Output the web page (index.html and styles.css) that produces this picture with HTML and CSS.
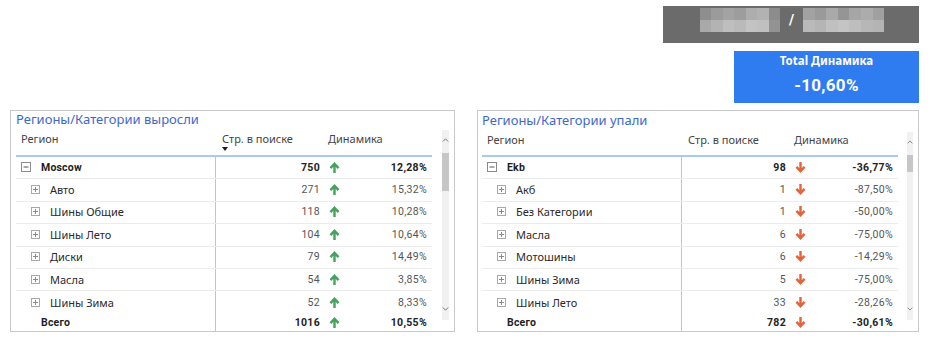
FILE: index.html
```html
<!DOCTYPE html>
<html lang="ru">
<head>
<meta charset="utf-8">
<title>Регионы</title>
<link rel="stylesheet" href="styles.css">
</head>
<body>
<div class="page">
  <div class="top">
    <div class="banner">
      <div class="mosaic mosaic--a">
        <i class="m1"></i><i class="m2"></i><i class="m3"></i><i class="m4"></i><i class="m5"></i><i class="m6"></i><i class="m7"></i>
        <i class="m8"></i><i class="m9"></i><i class="m10"></i><i class="m11"></i><i class="m12"></i><i class="m13"></i><i class="m14"></i>
      </div>
      <span class="slash">/</span>
      <div class="mosaic mosaic--b">
        <i class="n1"></i><i class="n2"></i><i class="n3"></i><i class="n4"></i><i class="n5"></i><i class="n6"></i><i class="n7"></i>
        <i class="n8"></i><i class="n9"></i><i class="n10"></i><i class="n11"></i><i class="n12"></i><i class="n13"></i><i class="n14"></i>
      </div>
    </div>
    <div class="kpi">
      <div class="kpi-label">Total Динамика</div>
      <div class="kpi-value">-10,60%</div>
    </div>
  </div>

  <div class="panels">
    <section class="panel panel--left">
      <div class="panel-title">Регионы/Категории выросли</div>
      <div class="panel-body">
        <div class="table">
          <div class="thead">
            <div class="h-region">Регион</div>
            <div class="h-num">Стр. в поиске<span class="sort"></span></div>
            <div class="h-dyn">Динамика</div>
          </div>
          <div class="row row--bold">
            <div class="cell c-region lvl0"><svg class="box" width="10" height="10" viewBox="0 0 10 10"><rect x="0.5" y="0.5" width="9" height="9" fill="none" stroke="#8a8a8a"/><path d="M2.5 5H7.5" stroke="#555"/></svg><span class="name-b">Moscow</span></div>
            <div class="cell c-num">750</div>
            <div class="cell c-arrow"><svg width="11" height="11" viewBox="0 0 10 10"><path d="M5 10V2M1.3 5.6L5 1.7L8.7 5.6" fill="none" stroke="#45a35c" stroke-width="2.2"/></svg></div>
            <div class="cell c-pct">12,28%</div>
          </div>
          <div class="row">
            <div class="cell c-region lvl1"><svg class="box" width="9" height="9" viewBox="0 0 9 9"><rect x="0.5" y="0.5" width="8" height="8" fill="none" stroke="#a8a8a8"/><path d="M2 4.5H7M4.5 2V7" stroke="#8a8a8a"/></svg><span>Авто</span></div>
            <div class="cell c-num">271</div>
            <div class="cell c-arrow"><svg width="11" height="11" viewBox="0 0 10 10"><path d="M5 10V2M1.3 5.6L5 1.7L8.7 5.6" fill="none" stroke="#45a35c" stroke-width="2.2"/></svg></div>
            <div class="cell c-pct">15,32%</div>
          </div>
          <div class="row">
            <div class="cell c-region lvl1"><svg class="box" width="9" height="9" viewBox="0 0 9 9"><rect x="0.5" y="0.5" width="8" height="8" fill="none" stroke="#a8a8a8"/><path d="M2 4.5H7M4.5 2V7" stroke="#8a8a8a"/></svg><span>Шины Общие</span></div>
            <div class="cell c-num">118</div>
            <div class="cell c-arrow"><svg width="11" height="11" viewBox="0 0 10 10"><path d="M5 10V2M1.3 5.6L5 1.7L8.7 5.6" fill="none" stroke="#45a35c" stroke-width="2.2"/></svg></div>
            <div class="cell c-pct">10,28%</div>
          </div>
          <div class="row">
            <div class="cell c-region lvl1"><svg class="box" width="9" height="9" viewBox="0 0 9 9"><rect x="0.5" y="0.5" width="8" height="8" fill="none" stroke="#a8a8a8"/><path d="M2 4.5H7M4.5 2V7" stroke="#8a8a8a"/></svg><span>Шины Лето</span></div>
            <div class="cell c-num">104</div>
            <div class="cell c-arrow"><svg width="11" height="11" viewBox="0 0 10 10"><path d="M5 10V2M1.3 5.6L5 1.7L8.7 5.6" fill="none" stroke="#45a35c" stroke-width="2.2"/></svg></div>
            <div class="cell c-pct">10,64%</div>
          </div>
          <div class="row">
            <div class="cell c-region lvl1"><svg class="box" width="9" height="9" viewBox="0 0 9 9"><rect x="0.5" y="0.5" width="8" height="8" fill="none" stroke="#a8a8a8"/><path d="M2 4.5H7M4.5 2V7" stroke="#8a8a8a"/></svg><span>Диски</span></div>
            <div class="cell c-num">79</div>
            <div class="cell c-arrow"><svg width="11" height="11" viewBox="0 0 10 10"><path d="M5 10V2M1.3 5.6L5 1.7L8.7 5.6" fill="none" stroke="#45a35c" stroke-width="2.2"/></svg></div>
            <div class="cell c-pct">14,49%</div>
          </div>
          <div class="row">
            <div class="cell c-region lvl1"><svg class="box" width="9" height="9" viewBox="0 0 9 9"><rect x="0.5" y="0.5" width="8" height="8" fill="none" stroke="#a8a8a8"/><path d="M2 4.5H7M4.5 2V7" stroke="#8a8a8a"/></svg><span>Масла</span></div>
            <div class="cell c-num">54</div>
            <div class="cell c-arrow"><svg width="11" height="11" viewBox="0 0 10 10"><path d="M5 10V2M1.3 5.6L5 1.7L8.7 5.6" fill="none" stroke="#45a35c" stroke-width="2.2"/></svg></div>
            <div class="cell c-pct">3,85%</div>
          </div>
          <div class="row row--last">
            <div class="cell c-region lvl1"><svg class="box" width="9" height="9" viewBox="0 0 9 9"><rect x="0.5" y="0.5" width="8" height="8" fill="none" stroke="#a8a8a8"/><path d="M2 4.5H7M4.5 2V7" stroke="#8a8a8a"/></svg><span>Шины Зима</span></div>
            <div class="cell c-num">52</div>
            <div class="cell c-arrow"><svg width="11" height="11" viewBox="0 0 10 10"><path d="M5 10V2M1.3 5.6L5 1.7L8.7 5.6" fill="none" stroke="#45a35c" stroke-width="2.2"/></svg></div>
            <div class="cell c-pct">8,33%</div>
          </div>
          <div class="row row--total row--bold">
            <div class="cell c-region lvltot"><span class="name-b">Всего</span></div>
            <div class="cell c-num">1016</div>
            <div class="cell c-arrow"><svg width="11" height="11" viewBox="0 0 10 10"><path d="M5 10V2M1.3 5.6L5 1.7L8.7 5.6" fill="none" stroke="#45a35c" stroke-width="2.2"/></svg></div>
            <div class="cell c-pct">10,55%</div>
          </div>
        </div>
        <div class="scroll">
          <div class="chev chev--up"><svg width="7" height="4" viewBox="0 0 7 4"><polyline points="0.8,3.6 3.5,0.8 6.2,3.6" fill="none" stroke="#7a7a7a"/></svg></div>
          <div class="thumb thumb--tall"></div>
          <div class="spacer"></div>
          <div class="chev chev--down"><svg width="7" height="4" viewBox="0 0 7 4"><polyline points="0.8,0.4 3.5,3.2 6.2,0.4" fill="none" stroke="#7a7a7a"/></svg></div>
        </div>
      </div>
    </section>

    <section class="panel panel--right">
      <div class="panel-title">Регионы/Категории упали</div>
      <div class="panel-body">
        <div class="table">
          <div class="thead thead--short">
            <div class="h-region">Регион</div>
            <div class="h-num">Стр. в поиске</div>
            <div class="h-dyn">Динамика</div>
          </div>
          <div class="row row--bold">
            <div class="cell c-region lvl0"><svg class="box" width="10" height="10" viewBox="0 0 10 10"><rect x="0.5" y="0.5" width="9" height="9" fill="none" stroke="#8a8a8a"/><path d="M2.5 5H7.5" stroke="#555"/></svg><span class="name-b">Ekb</span></div>
            <div class="cell c-num">98</div>
            <div class="cell c-arrow"><svg width="11" height="11" viewBox="0 0 10 10"><path d="M5 0V8M1.3 4.4L5 8.3L8.7 4.4" fill="none" stroke="#e4633b" stroke-width="2.2"/></svg></div>
            <div class="cell c-pct">-36,77%</div>
          </div>
          <div class="row">
            <div class="cell c-region lvl1"><svg class="box" width="9" height="9" viewBox="0 0 9 9"><rect x="0.5" y="0.5" width="8" height="8" fill="none" stroke="#a8a8a8"/><path d="M2 4.5H7M4.5 2V7" stroke="#8a8a8a"/></svg><span>Акб</span></div>
            <div class="cell c-num">1</div>
            <div class="cell c-arrow"><svg width="11" height="11" viewBox="0 0 10 10"><path d="M5 0V8M1.3 4.4L5 8.3L8.7 4.4" fill="none" stroke="#e4633b" stroke-width="2.2"/></svg></div>
            <div class="cell c-pct">-87,50%</div>
          </div>
          <div class="row">
            <div class="cell c-region lvl1"><svg class="box" width="9" height="9" viewBox="0 0 9 9"><rect x="0.5" y="0.5" width="8" height="8" fill="none" stroke="#a8a8a8"/><path d="M2 4.5H7M4.5 2V7" stroke="#8a8a8a"/></svg><span>Без Категории</span></div>
            <div class="cell c-num">1</div>
            <div class="cell c-arrow"><svg width="11" height="11" viewBox="0 0 10 10"><path d="M5 0V8M1.3 4.4L5 8.3L8.7 4.4" fill="none" stroke="#e4633b" stroke-width="2.2"/></svg></div>
            <div class="cell c-pct">-50,00%</div>
          </div>
          <div class="row">
            <div class="cell c-region lvl1"><svg class="box" width="9" height="9" viewBox="0 0 9 9"><rect x="0.5" y="0.5" width="8" height="8" fill="none" stroke="#a8a8a8"/><path d="M2 4.5H7M4.5 2V7" stroke="#8a8a8a"/></svg><span>Масла</span></div>
            <div class="cell c-num">6</div>
            <div class="cell c-arrow"><svg width="11" height="11" viewBox="0 0 10 10"><path d="M5 0V8M1.3 4.4L5 8.3L8.7 4.4" fill="none" stroke="#e4633b" stroke-width="2.2"/></svg></div>
            <div class="cell c-pct">-75,00%</div>
          </div>
          <div class="row">
            <div class="cell c-region lvl1"><svg class="box" width="9" height="9" viewBox="0 0 9 9"><rect x="0.5" y="0.5" width="8" height="8" fill="none" stroke="#a8a8a8"/><path d="M2 4.5H7M4.5 2V7" stroke="#8a8a8a"/></svg><span>Мотошины</span></div>
            <div class="cell c-num">6</div>
            <div class="cell c-arrow"><svg width="11" height="11" viewBox="0 0 10 10"><path d="M5 0V8M1.3 4.4L5 8.3L8.7 4.4" fill="none" stroke="#e4633b" stroke-width="2.2"/></svg></div>
            <div class="cell c-pct">-14,29%</div>
          </div>
          <div class="row">
            <div class="cell c-region lvl1"><svg class="box" width="9" height="9" viewBox="0 0 9 9"><rect x="0.5" y="0.5" width="8" height="8" fill="none" stroke="#a8a8a8"/><path d="M2 4.5H7M4.5 2V7" stroke="#8a8a8a"/></svg><span>Шины Зима</span></div>
            <div class="cell c-num">5</div>
            <div class="cell c-arrow"><svg width="11" height="11" viewBox="0 0 10 10"><path d="M5 0V8M1.3 4.4L5 8.3L8.7 4.4" fill="none" stroke="#e4633b" stroke-width="2.2"/></svg></div>
            <div class="cell c-pct">-75,00%</div>
          </div>
          <div class="row row--last">
            <div class="cell c-region lvl1"><svg class="box" width="9" height="9" viewBox="0 0 9 9"><rect x="0.5" y="0.5" width="8" height="8" fill="none" stroke="#a8a8a8"/><path d="M2 4.5H7M4.5 2V7" stroke="#8a8a8a"/></svg><span>Шины Лето</span></div>
            <div class="cell c-num">33</div>
            <div class="cell c-arrow"><svg width="11" height="11" viewBox="0 0 10 10"><path d="M5 0V8M1.3 4.4L5 8.3L8.7 4.4" fill="none" stroke="#e4633b" stroke-width="2.2"/></svg></div>
            <div class="cell c-pct">-28,26%</div>
          </div>
          <div class="row row--total row--bold">
            <div class="cell c-region lvltot"><span class="name-b">Всего</span></div>
            <div class="cell c-num">782</div>
            <div class="cell c-arrow"><svg width="11" height="11" viewBox="0 0 10 10"><path d="M5 0V8M1.3 4.4L5 8.3L8.7 4.4" fill="none" stroke="#e4633b" stroke-width="2.2"/></svg></div>
            <div class="cell c-pct">-30,61%</div>
          </div>
        </div>
        <div class="scroll scroll--narrow">
          <div class="chev chev--up"><svg width="7" height="4" viewBox="0 0 7 4"><polyline points="0.8,3.6 3.5,0.8 6.2,3.6" fill="none" stroke="#7a7a7a"/></svg></div>
          <div class="thumb thumb--short"></div>
          <div class="spacer"></div>
          <div class="chev chev--down"><svg width="7" height="4" viewBox="0 0 7 4"><polyline points="0.8,0.4 3.5,3.2 6.2,0.4" fill="none" stroke="#7a7a7a"/></svg></div>
        </div>
      </div>
    </section>
  </div>
</div>
</body>
</html>
```

FILE: styles.css
```css
* { box-sizing: border-box; }

html, body {
  margin: 0;
  background: #ffffff;
}

body {
  font-family: "Noto Sans", "Liberation Sans", sans-serif;
  color: #333333;
}

.page {
  width: 932px;
  height: 341px;
  padding: 6px 13px 0 10px;
  overflow: hidden;
}

/* ---------- top block ---------- */
.top {
  display: flex;
  flex-direction: column;
  align-items: flex-end;
  gap: 8px;
}

.banner {
  width: 256px;
  height: 37px;
  background: #6b6b6b;
  display: flex;
  align-items: flex-start;
  padding: 2px 0 0 37px;
}

.mosaic {
  display: grid;
  grid-template-columns: repeat(7, 1fr);
  grid-auto-rows: 12px;
}
.mosaic--a { width: 80px; }
.mosaic--b { width: 81px; }
.mosaic i { display: block; }

.m1 { background: #8e8e8e; } .m2 { background: #9b9b9b; } .m3 { background: #a3a3a3; }
.m4 { background: #9d9d9d; } .m5 { background: #adadad; } .m6 { background: #b2b2b2; }
.m7 { background: #8c8c8c; }
.m8 { background: #a9a9a9; } .m9 { background: #b3b3b3; } .m10 { background: #bebebe; }
.m11 { background: #bababa; } .m12 { background: #c3c3c3; } .m13 { background: #c0c0c0; }
.m14 { background: #939393; }

.n1 { background: #a2a2a2; } .n2 { background: #9a9a9a; } .n3 { background: #a9a9a9; }
.n4 { background: #959595; } .n5 { background: #a6a6a6; } .n6 { background: #acacac; }
.n7 { background: #a0a0a0; }
.n8 { background: #bababa; } .n9 { background: #b5b5b5; } .n10 { background: #c0c0c0; }
.n11 { background: #c4c4c4; } .n12 { background: #bebebe; } .n13 { background: #b7b7b7; }
.n14 { background: #b4b4b4; }

.slash {
  color: #ffffff;
  font-family: "Roboto", sans-serif;
  font-weight: 700;
  font-size: 14px;
  line-height: 24px;
  margin: 0 9px 0 9px;
}

.kpi {
  width: 185px;
  height: 52px;
  background: #2f7bf0;
  color: #ffffff;
  text-align: center;
  padding-top: 2px;
}
.kpi-label {
  font-family: "Noto Sans", sans-serif;
  font-size: 11.5px;
  font-weight: 700;
  line-height: 15px;
}
.kpi-value {
  font-family: "Roboto", sans-serif;
  font-size: 17px;
  font-weight: 700;
  line-height: 22px;
  margin-top: 6px;
  letter-spacing: 0.3px;
}

/* ---------- panels ---------- */
.panels {
  display: flex;
  gap: 22px;
  margin-top: 7px;
}

.panel {
  border: 1px solid #c9c9c9;
  padding: 0 5px 0 5px;
}
.panel--right { padding-left: 4px; padding-top: 1px; }

.panel-title {
  color: #3d67cf;
  font-size: 13px;
  line-height: 17px;
  white-space: nowrap;
}

.panel-body {
  display: flex;
  align-items: flex-start;
}

.table { width: 416px; }

.thead,
.row {
  display: grid;
  grid-template-columns: 200px 112px 14px 90px;
}

.thead {
  height: 29px;
  border-bottom: 2px solid #a9caee;
  font-size: 11px;
  line-height: 16px;
  color: #444444;
  padding-top: 3px;
}
.thead--short { height: 28px; }

.h-region { padding-left: 5px; }
.h-num { padding-left: 6px; display: flex; flex-direction: column; align-items: flex-start; }
.h-dyn { grid-column: span 2; }

.sort {
  width: 0;
  height: 0;
  border-left: 3.5px solid transparent;
  border-right: 3.5px solid transparent;
  border-top: 4px solid #1e1e1e;
}

.row {
  height: 22.4px;
  border-bottom: 1px solid #ececec;
  font-family: "Roboto", sans-serif;
  font-size: 10.5px;
  color: #555555;
  letter-spacing: 0.3px;
}
.row--last { border-bottom: none; }
.row--total { height: 17px; border-bottom: none; }
.row--bold { color: #222222; font-weight: 700; }

.cell {
  display: flex;
  align-items: center;
  padding-bottom: 1px;
}
.row--total .cell { padding-bottom: 0; }

.c-region {
  border-right: 1px solid #a9caee;
  gap: 10px;
  font-family: "Noto Sans", sans-serif;
  font-size: 11px;
  letter-spacing: 0;
  color: #2a2a2a;
  white-space: nowrap;
}
.lvl0 { padding-left: 5px; }
.lvl1 { padding-left: 15px; }
.lvltot { padding-left: 25px; }

.name-b {
  font-family: "Roboto", sans-serif;
  font-weight: 700;
  font-size: 10.5px;
  color: #1e1e1e;
  letter-spacing: 0.2px;
}

.box { flex: none; display: block; }

.c-num { justify-content: flex-end; padding-right: 8px; }
.c-arrow { padding-left: 1px; }
.c-arrow svg { display: block; }
.c-pct { justify-content: flex-end; padding-right: 5px; }

/* ---------- scrollbar ---------- */
.scroll {
  width: 7px;
  margin-left: 10px;
  margin-top: 2px;
  height: 190px;
  background: #f1f1f1;
  display: flex;
  flex-direction: column;
  align-items: center;
  padding-bottom: 2px;
}
.scroll--narrow { width: 6px; margin-left: 9px; margin-top: 3px; height: 188px; }

.chev {
  display: flex;
  align-items: center;
  justify-content: center;
  width: 100%;
}
.chev svg { display: block; }
.chev--up { height: 20px; }
.chev--down { height: 18px; }

.thumb {
  width: 100%;
  margin-top: 3px;
  background: #c6c6c6;
}
.thumb--tall { height: 38px; }
.thumb--short { height: 17px; }

.spacer { flex: 1; }
```
